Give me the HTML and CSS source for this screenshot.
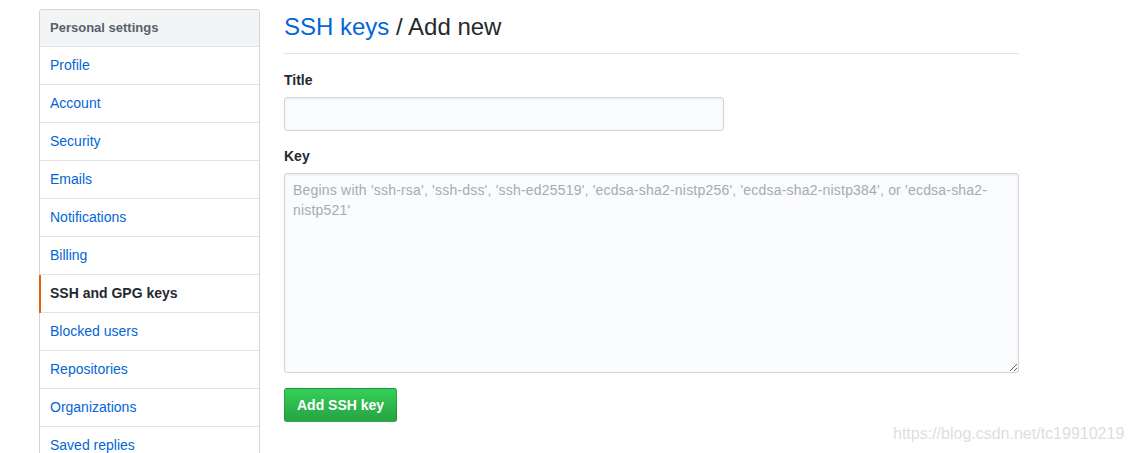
FILE: index.html
```html
<!DOCTYPE html>
<html>
<head>
<meta charset="utf-8">
<link rel="stylesheet" href="styles.css">
</head>
<body>
<div class="page">
  <nav class="menu">
    <div class="menu-heading">Personal settings</div>
    <a class="menu-item" href="#">Profile</a>
    <a class="menu-item" href="#">Account</a>
    <a class="menu-item" href="#">Security</a>
    <a class="menu-item" href="#">Emails</a>
    <a class="menu-item" href="#">Notifications</a>
    <a class="menu-item" href="#">Billing</a>
    <a class="menu-item selected" href="#">SSH and GPG keys</a>
    <a class="menu-item" href="#">Blocked users</a>
    <a class="menu-item" href="#">Repositories</a>
    <a class="menu-item" href="#">Organizations</a>
    <a class="menu-item" href="#">Saved replies</a>
  </nav>
  <main class="content">
    <div class="subhead">
      <h2 class="subhead-heading"><a href="#">SSH keys</a> / Add new</h2>
    </div>
    <form class="form">
      <div class="form-group">
        <label class="label" for="title">Title</label>
        <input class="input input-title" id="title" type="text">
      </div>
      <div class="form-group">
        <label class="label" for="key">Key</label>
        <textarea class="input input-key" id="key" placeholder="Begins with 'ssh-rsa', 'ssh-dss', 'ssh-ed25519', 'ecdsa-sha2-nistp256', 'ecdsa-sha2-nistp384', or 'ecdsa-sha2-nistp521'"></textarea>
      </div>
      <button class="btn-primary" type="button">Add SSH key</button>
    </form>
  </main>
</div>
<div class="watermark">https://blog.csdn.net/tc19910219</div>
</body>
</html>
```

FILE: styles.css
```css
html, body {
  margin: 0;
  padding: 0;
  background: #fff;
  overflow: hidden;
}
body {
  font-family: "Liberation Sans", Arial, sans-serif;
  font-size: 14px;
  line-height: 1.5;
  color: #24292e;
  height: 453px;
}
.page {
  display: flex;
  align-items: flex-start;
  gap: 24px;
  padding: 9px 0 0 39px;
}
.menu {
  width: 221px;
  box-sizing: border-box;
  flex: none;
  border: 1px solid #d1d5da;
  border-radius: 3px;
  background: #fff;
  display: flex;
  flex-direction: column;
}
.menu-heading {
  padding: 8px 10px;
  line-height: 20px;
  font-size: 13px;
  font-weight: bold;
  color: #586069;
  background: #f3f4f6;
  border-bottom: 1px solid #e1e4e8;
  border-radius: 3px 3px 0 0;
}
.menu-item {
  position: relative;
  display: block;
  padding: 8px 10px;
  line-height: 21px;
  color: #0366d6;
  text-decoration: none;
  border-bottom: 1px solid #e1e4e8;
}
.menu-item.selected {
  font-weight: bold;
  color: #24292e;
}
.menu-item.selected::before {
  content: "";
  position: absolute;
  left: -1px;
  top: 0;
  bottom: -1px;
  width: 2px;
  background: #e36209;
}
.content {
  width: 735px;
  flex: none;
}
.subhead {
  padding-bottom: 8px;
  margin-bottom: 16px;
  border-bottom: 1px solid #e1e4e8;
}
.subhead-heading {
  margin: 0;
  font-size: 24px;
  font-weight: normal;
  line-height: 36px;
  color: #24292e;
}
.subhead-heading a {
  color: #0366d6;
  text-decoration: none;
}
.form {
  margin: 0;
}
.form-group {
  margin-bottom: 15px;
}
.label {
  display: block;
  font-weight: bold;
  font-size: 14px;
  line-height: 21px;
  margin-bottom: 6px;
}
.input {
  display: block;
  box-sizing: border-box;
  font-family: "Liberation Sans", Arial, sans-serif;
  font-size: 14px;
  line-height: 20px;
  color: #24292e;
  padding: 6px 8px;
  background: #fafbfc;
  border: 1px solid #d1d5da;
  border-radius: 3px;
  box-shadow: inset 0 1px 2px rgba(27, 31, 35, 0.075);
  outline: none;
  margin: 0;
}
.input-title {
  width: 440px;
  height: 34px;
}
.input-key {
  width: 735px;
  height: 200px;
  resize: vertical;
  letter-spacing: 0.2px;
}
.input-key::placeholder {
  color: #a6abb0;
}
.btn-primary {
  display: block;
  box-sizing: border-box;
  height: 34px;
  padding: 6px 12px;
  font-family: "Liberation Sans", Arial, sans-serif;
  font-size: 14px;
  font-weight: bold;
  line-height: 20px;
  color: #fff;
  background: linear-gradient(-180deg, #34d058 0%, #28a745 90%);
  border: 1px solid rgba(27, 31, 35, 0.2);
  border-radius: 3px;
  cursor: pointer;
}
.watermark {
  position: absolute;
  left: 893px;
  top: 426px;
  font-family: "Liberation Sans", Arial, sans-serif;
  font-size: 16px;
  line-height: 16px;
  color: #dedede;
  white-space: nowrap;
}
```
